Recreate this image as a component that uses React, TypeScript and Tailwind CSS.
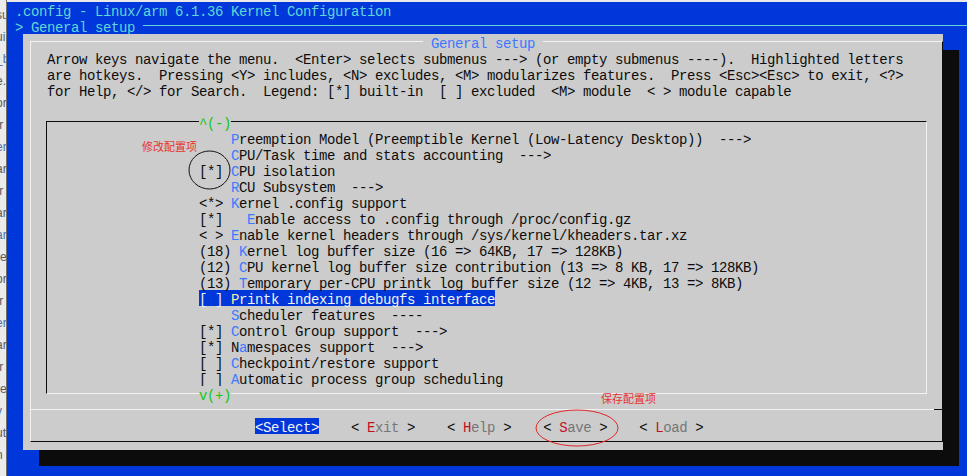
const items = [
  { pre: "    ", hot: "P", rest: "reemption Model (Preemptible Kernel (Low-Latency Desktop))  --->" },
  { pre: "    ", hot: "C", rest: "PU/Task time and stats accounting  --->" },
  { pre: "[*] ", hot: "C", rest: "PU isolation" },
  { pre: "    ", hot: "R", rest: "CU Subsystem  --->" },
  { pre: "<*> ", hot: "K", rest: "ernel .config support" },
  { pre: "[*]   ", hot: "E", rest: "nable access to .config through /proc/config.gz" },
  { pre: "< > ", hot: "E", rest: "nable kernel headers through /sys/kernel/kheaders.tar.xz" },
  { pre: "(18) ", hot: "K", rest: "ernel log buffer size (16 => 64KB, 17 => 128KB)" },
  { pre: "(12) ", hot: "C", rest: "PU kernel log buffer size contribution (13 => 8 KB, 17 => 128KB)" },
  { pre: "(13) ", hot: "T", rest: "emporary per-CPU printk log buffer size (12 => 4KB, 13 => 8KB)" },
  { pre: "[ ] ", hot: "P", rest: "rintk indexing debugfs interface", selected: true },
  { pre: "    ", hot: "S", rest: "cheduler features  ----" },
  { pre: "[*] ", hot: "C", rest: "ontrol Group support  --->" },
  { pre: "[*] N", hot: "a", rest: "mespaces support  --->" },
  { pre: "[ ] ", hot: "C", rest: "heckpoint/restore support" },
  { pre: "[ ] ", hot: "A", rest: "utomatic process group scheduling" },
];

const buttons = [
  { hot: "E", rest: "xit" },
  { hot: "H", rest: "elp" },
  { hot: "S", rest: "ave" },
  { hot: "L", rest: "oad" },
];

// bits of the window behind the terminal, only a few pixels show
const behind = ["su", "ui", "_b", "e.", "or", "tr", "er", "ar", "tr", "ar", "ar", "re", "or", "tr", "er", "ar", "tr", "re", "v", "ut", "n"];

function LeftStrip() {
  return (
    <div className="flex h-full w-[7px] shrink-0 flex-col overflow-hidden border-r border-[#6f6f6f] bg-[#ebebeb] pt-[4px] font-['Liberation_Sans',sans-serif] tracking-normal">
      {behind.map((t, i) => (
        <div key={i} className={`-ml-[4px] h-[22px] text-[12px] leading-[22px] ${i % 4 === 2 ? "text-[#4c6ea8]" : "text-[#5a5a5a]"}`}>
          {t}
        </div>
      ))}
    </div>
  );
}

function MenuRow({ pre, hot, rest, selected }: { pre: string; hot: string; rest: string; selected?: boolean }) {
  if (selected) {
    return (
      <div className="ml-[152px] h-4 w-[296px] bg-[#0037da] whitespace-pre leading-5 text-[#f2f2f2]">
        {pre}
        <span className="text-[#f9f1a5]">{hot}</span>
        {rest}
      </div>
    );
  }
  return (
    <div className="h-4 pl-[152px] whitespace-pre leading-5">
      {pre}
      <span className="text-[#3b78ff]">{hot}</span>
      {rest}
    </div>
  );
}

export default function App() {
  return (
    <div className="relative flex h-[476px] w-[967px] overflow-hidden bg-[#0037da] font-['Liberation_Mono','DejaVu_Sans_Mono',monospace] text-[14px] tracking-[-0.4px] text-[#0c0c0c]">
      <LeftStrip />
      <div className="flex w-[960px] flex-col">
        <div className="h-[2px] bg-[#e9e9e9]" />
        <div className="h-4 pl-2 whitespace-pre leading-5 text-[#61d6d6]">.config - Linux/arm 6.1.36 Kernel Configuration</div>
        <div className="flex h-4 pl-2 leading-5 text-[#61d6d6]">
          <span className="whitespace-pre">&gt; General setup </span>
          <div className="mt-[7px] h-px flex-1 bg-[#61d6d6]" />
        </div>

        {/* dialog */}
        <div className="ml-4 h-[416px] w-[920px] bg-[#cccccc] pt-[7px] pl-[7px] shadow-[16px_16px_0_#0c0c0c]">
          <div className="relative flex h-[401px] w-[913px] flex-col border border-t-[#f2f2f2] border-l-[#f2f2f2] border-r-[#0c0c0c] border-b-[#0c0c0c]">
            <div className="absolute -top-2 left-[392px] h-4 bg-[#cccccc] whitespace-pre leading-5 text-[#3b78ff]"> General setup </div>

            <div className="pt-2 pl-4 whitespace-pre">
              <div className="h-4 leading-5">Arrow keys navigate the menu.  &lt;Enter&gt; selects submenus ---&gt; (or empty submenus ----).  Highlighted letters</div>
              <div className="h-4 leading-5">are hotkeys.  Pressing &lt;Y&gt; includes, &lt;N&gt; excludes, &lt;M&gt; modularizes features.  Press &lt;Esc&gt;&lt;Esc&gt; to exit, &lt;?&gt;</div>
              <div className="h-4 leading-5">for Help, &lt;/&gt; for Search.  Legend: [*] built-in  [ ] excluded  &lt;M&gt; module  &lt; &gt; module capable</div>
            </div>

            {/* menu list box */}
            <div className="relative mx-[15px] mt-[23px] h-[273px] border border-t-[#0c0c0c] border-l-[#0c0c0c] border-r-[#f2f2f2] border-b-[#f2f2f2] pt-2">
              <div className="absolute -top-2 left-[152px] h-4 bg-[#cccccc] leading-5 text-[#16c60c]">^(-)</div>
              {items.map((it, i) => (
                <MenuRow key={i} pre={it.pre} hot={it.hot} rest={it.rest} selected={it.selected} />
              ))}
              <div className="absolute -bottom-[9px] left-[152px] h-4 bg-[#cccccc] leading-5 text-[#16c60c]">v(+)</div>
            </div>

            <div className="mt-[15px] flex h-px">
              <div className="flex-1 bg-[#f2f2f2]" />
              <div className="w-2 bg-[#0c0c0c]" />
            </div>

            <div className="mt-2 flex h-4 gap-8 pl-[224px] whitespace-pre leading-5">
              <span className="bg-[#0037da] text-[#f2f2f2]">&lt;Select&gt;</span>
              {buttons.map((b) => (
                <span key={b.hot}>
                  &lt; <span className="text-[#c50f1f]">{b.hot}</span>
                  <span className="text-[#767676]">{b.rest}</span> &gt;
                </span>
              ))}
            </div>
          </div>
        </div>
      </div>

      {/* annotations drawn on the screenshot */}
      <div className="absolute left-[142px] top-[139px] font-['Noto_Sans_CJK_SC',sans-serif] text-[11px] leading-[14px] tracking-normal text-[#e8322e]">修改配置项</div>
      <div className="absolute left-[601px] top-[391px] font-['Noto_Sans_CJK_SC',sans-serif] text-[11px] leading-[14px] tracking-normal text-[#e8322e]">保存配置项</div>
      <svg className="pointer-events-none absolute inset-0" width="967" height="476">
        <ellipse cx="209.5" cy="170" rx="20.5" ry="19" fill="none" stroke="#111" strokeWidth="1" />
        <ellipse cx="577" cy="428" rx="41" ry="18" fill="none" stroke="#e02828" strokeWidth="1" />
      </svg>
    </div>
  );
}
